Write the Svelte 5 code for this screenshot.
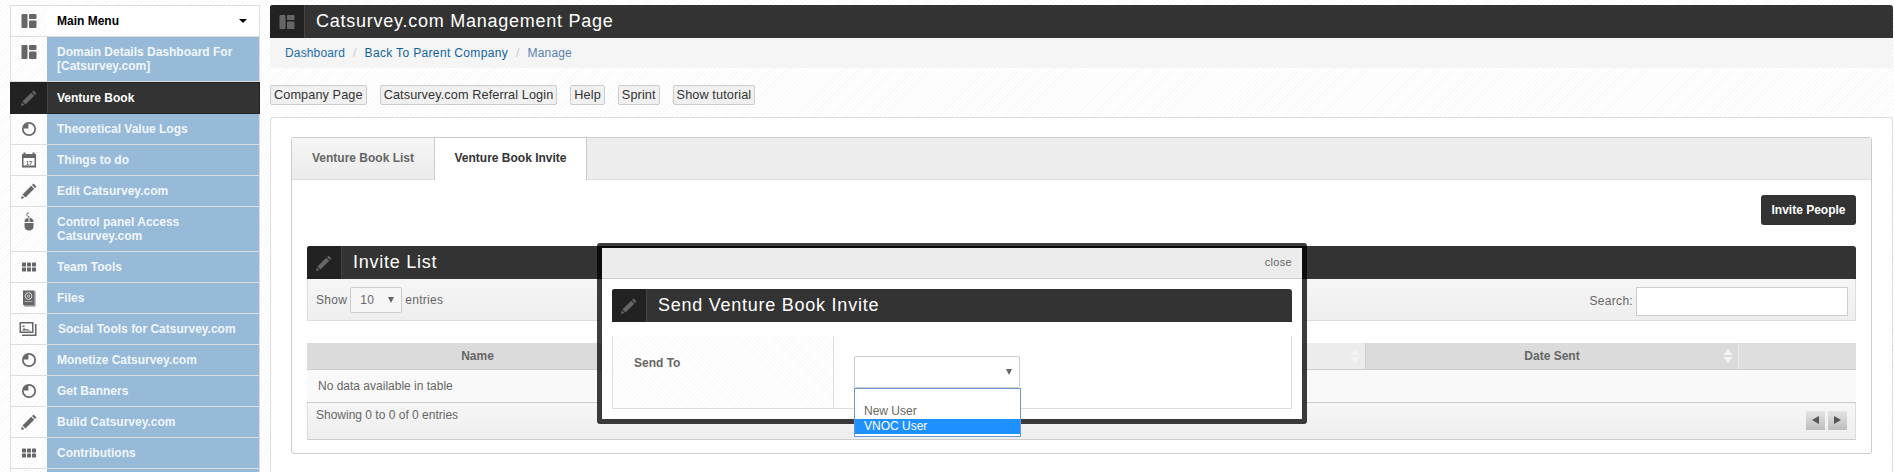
<script>
	const menu = [
		{ icon: 'dash', label: 'Domain Details Dashboard For [Catsurvey.com]', tall: true },
		{ icon: 'pencil', label: 'Venture Book', active: true },
		{ icon: 'pie', label: 'Theoretical Value Logs' },
		{ icon: 'calendar', label: 'Things to do' },
		{ icon: 'pencil', label: 'Edit Catsurvey.com' },
		{ icon: 'mouse', label: 'Control panel Access Catsurvey.com', tall: true },
		{ icon: 'grid', label: 'Team Tools' },
		{ icon: 'book', label: 'Files' },
		{ icon: 'images', label: 'Social Tools for Catsurvey.com', nudge: true },
		{ icon: 'pie', label: 'Monetize Catsurvey.com' },
		{ icon: 'pie', label: 'Get Banners' },
		{ icon: 'pencil', label: 'Build Catsurvey.com' },
		{ icon: 'grid', label: 'Contributions' },
		{ icon: 'grid', label: '' }
	];
	const buttons = ['Company Page', 'Catsurvey.com Referral Login', 'Help', 'Sprint', 'Show tutorial'];
</script>

{#snippet icon(name)}
	<svg class="ico" viewBox="0 0 20 20" width="20" height="20" aria-hidden="true">
		{#if name === 'dash'}
			<rect x="2.5" y="3" width="6" height="14" rx="1" />
			<rect x="10" y="3" width="7.5" height="5" rx="1" />
			<rect x="10" y="9.5" width="7.5" height="7.5" rx="1" />
		{:else if name === 'pencil'}
			<path d="M14.5 2.5 L17.5 5.5 L16 7 L13 4 Z M12.2 4.8 L15.2 7.8 L6.5 16.5 L3.5 13.5 Z M2.9 14.6 L5.4 17.1 L2 18 Z" />
		{:else if name === 'pie'}
			<circle cx="10" cy="10" r="6.2" fill="none" stroke="#666" stroke-width="1.7" />
			<path d="M9.4 9.4 V4.6 A5.4 5.4 0 0 0 4.6 9.4 Z" />
		{:else if name === 'calendar'}
			<path d="M4.5 2.5 h2 v1.5 h7 v-1.5 h2 v1.5 h1.5 v13.5 h-14 v-13.5 h1.5 Z M4.5 8 v7.5 h11 v-7.5 Z" fill-rule="evenodd" />
			<text x="10" y="14.6" class="cal">17</text>
		{:else if name === 'mouse'}
			<path d="M10 1 C6.5 1 7 4 10 4.6 L10 6" fill="none" stroke="#666" stroke-width="1" />
			<path d="M5.5 10 C5.5 7.5 7 6 9.5 6 V10 Z M10.5 6 C13 6 14.5 7.5 14.5 10 H10.5 Z M5.5 11 H14.5 V14.5 C14.5 17 12.5 18.5 10 18.5 C7.5 18.5 5.5 17 5.5 14.5 Z" />
		{:else if name === 'grid'}
			{#each [3, 8, 13] as x}
				{#each [5.5, 10.5] as y}
					<rect {x} {y} width="4" height="4" rx="0.6" />
				{/each}
			{/each}
		{:else if name === 'book'}
			<path d="M4 2.5 H15.5 V17.5 H5 L4 16.5 Z" />
			<path d="M15.5 3.5 H16.5 V18.5 H5.5 V17.5 H15.5 Z" opacity="0.8" />
			<circle cx="9.5" cy="8" r="3.4" fill="none" stroke="#ddd" stroke-width="1" />
			<circle cx="9.5" cy="8" r="1.2" fill="none" stroke="#ddd" stroke-width="0.8" />
			<rect x="5.5" y="13" width="8" height="1" fill="#aaa" />
		{:else if name === 'images'}
			<path d="M0.5 3 H14.5 V14 H0.5 Z M2 4.5 V12.5 H13 V4.5 Z" fill-rule="evenodd" />
			<path d="M3 11.5 L5 9 L7 10.5 L8 10 L12 11.5 Z M3.5 6.5 h2 v1.5 h-2 Z" />
			<path d="M16 5 H17.5 V17 H3 V15.5 H16 Z" />
		{/if}
	</svg>
{/snippet}

{#snippet titleBar(name, text)}
	<div class="title-bar">
		<span class="title-icon">{@render icon(name)}</span>
		<h2>{text}</h2>
	</div>
{/snippet}

{#snippet sortArrows()}
	<svg class="sort" viewBox="0 0 10 16" width="10" height="16" aria-hidden="true">
		<path d="M5 1 L9.5 7 H0.5 Z M0.5 9 H9.5 L5 15 Z" />
	</svg>
{/snippet}

<div class="page">
	<nav class="sidebar">
		<div class="row head">
			<span class="cell-icon">{@render icon('dash')}</span>
			<span class="cell-label">Main Menu<i class="caret"></i></span>
		</div>
		{#each menu as item}
			<div class="row" class:tall={item.tall} class:active={item.active} class:nudge={item.nudge}>
				<span class="cell-icon">{@render icon(item.icon)}</span>
				<span class="cell-label">{item.label}</span>
			</div>
		{/each}
	</nav>

	<main class="main">
		{@render titleBar('dash', 'Catsurvey.com Management Page')}
		<div class="crumbs">
			<a href="#top">Dashboard</a><span class="sep">/</span>
			<a href="#top" class="parent">Back To Parent Company</a><span class="sep">/</span>
			<span class="current">Manage</span>
		</div>

		<div class="actions">
			{#each buttons as label}
				<button type="button" class="plain">{label}</button>
			{/each}
		</div>

		<section class="panel">
			<div class="tabs">
				<div class="tab-head">
					<div class="tab">Venture Book List</div>
					<div class="tab on">Venture Book Invite</div>
				</div>
				<div class="tab-body">
					<div class="invite-row">
						<button type="button" class="dark">Invite People</button>
					</div>

					{@render titleBar('pencil', 'Invite List')}
					<div class="toolbar">
						<div class="length">
							Show
							<div class="fake-select small"><span>10</span><i class="tri"></i></div>
							entries
						</div>
						<label class="search">Search: <input type="text" /></label>
					</div>

					<div class="thead">
						<div class="th name">Name</div>
						<div class="th mid">{@render sortArrows()}</div>
						<div class="th date">Date Sent{@render sortArrows()}</div>
						<div class="th last"></div>
					</div>
					<div class="empty">No data available in table</div>
					<div class="tfoot">
						<span>Showing 0 to 0 of 0 entries</span>
						<div class="pager">
							<span class="page-btn"><i class="left"></i></span>
							<span class="page-btn"><i class="right"></i></span>
						</div>
					</div>
				</div>
			</div>
		</section>
	</main>

	<div class="modal">
		<div class="modal-head"><span>close</span></div>
		<div class="modal-body">
			{@render titleBar('pencil', 'Send Venture Book Invite')}
			<div class="form-row">
				<div class="form-label">Send To</div>
				<div class="form-value">
					<div class="fake-select wide"><span></span><i class="tri"></i></div>
				</div>
			</div>
		</div>
		<div class="dropdown">
			<div class="opt"></div>
			<div class="opt">New User</div>
			<div class="opt hi">VNOC User</div>
		</div>
	</div>
</div>

<style>
	:global(body) {
		margin: 0;
		overflow: hidden;
	}
	.page {
		position: relative;
		box-sizing: border-box;
		display: flex;
		gap: 10px;
		height: 472px;
		padding: 5px 1px 0 10px;
		overflow: hidden;
		font-family: "Liberation Sans", Arial, sans-serif;
		font-size: 12px;
		color: #666;
		background: repeating-linear-gradient(135deg, #fff 0, #fff 2px, #f8f8f8 2px, #f8f8f8 3px);
	}

	.ico {
		display: block;
		fill: #666;
	}
	.cal {
		font: bold 6px "Liberation Sans", Arial, sans-serif;
		text-anchor: middle;
		fill: #666;
	}

	/* sidebar */
	.sidebar {
		flex: 0 0 250px;
		box-sizing: border-box;
		border: 1px solid #ddd;
		border-bottom: 0;
	}
	.row {
		display: flex;
		height: 31px;
		box-sizing: border-box;
		border-bottom: 1px solid #ddd;
		flex-shrink: 0;
	}
	.row.tall {
		height: 45px;
	}
	.cell-icon {
		flex: 0 0 36px;
		display: flex;
		justify-content: center;
		padding-top: 5px;
		box-sizing: border-box;
	}
	.cell-label {
		flex: 1;
		display: flex;
		align-items: center;
		padding: 0 10px;
		font-weight: bold;
		line-height: 14px;
		color: #f0f6fb;
		background: #97bad8;
	}
	.nudge .cell-label {
		padding-left: 11px;
	}
	.head .cell-label {
		position: relative;
		color: #000;
		background: #fff;
	}
	.caret {
		position: absolute;
		right: 12px;
		top: 13px;
		border: 4px solid transparent;
		border-top: 4px solid #000;
		border-bottom: 0;
	}
	.row.active {
		height: 32px;
		margin: 0 -1px;
		border: 1px solid #222;
		background: #222;
	}
	.active .cell-label {
		padding-left: 9px;
		color: #fff;
		background: #333;
		border-left: 1px solid #444;
	}

	/* main column */
	.main {
		flex: 1;
		min-width: 0;
		display: flex;
		flex-direction: column;
	}
	.title-bar {
		display: flex;
		align-items: stretch;
		height: 33px;
		flex-shrink: 0;
		border-radius: 3px 3px 0 0;
		background: #333;
		overflow: hidden;
	}
	.title-icon {
		flex: 0 0 35px;
		box-sizing: border-box;
		display: flex;
		align-items: center;
		justify-content: center;
		background: #222;
		border-right: 1px solid #444;
	}
	.title-bar h2 {
		margin: 0;
		padding-left: 11px;
		font-size: 18px;
		font-weight: normal;
		line-height: 32px;
		letter-spacing: 0.75px;
		color: #fff;
	}
	.crumbs {
		height: 30px;
		display: flex;
		align-items: center;
		padding-left: 15px;
		letter-spacing: 0.15px;
		background: #f5f5f5;
		border-radius: 0 0 4px 4px;
	}
	.crumbs a {
		color: #1b6ca8;
		text-decoration: none;
	}
	.crumbs a.parent {
		color: #0f639f;
		letter-spacing: 0.35px;
	}
	.sep {
		padding: 0 8px;
		color: #ccc;
	}
	.current {
		color: #5b7fae;
	}
	.actions {
		display: flex;
		gap: 13px;
		margin: 17px 0 12px;
	}
	.plain {
		height: 20px;
		padding: 0 3px;
		font: 12.7px "Liberation Sans", Arial, sans-serif;
		letter-spacing: 0.1px;
		color: #333;
		background: #f0f0f0;
		border: 1px solid #ccc;
		border-radius: 2px;
	}
	.panel {
		flex: 1;
		padding: 19px 20px 0;
		background: #fff;
		border: 1px solid #ddd;
		border-bottom: 0;
		border-radius: 3px 3px 0 0;
	}
	.tabs {
		height: 317px;
		box-sizing: border-box;
		border: 1px solid #ccc;
		border-radius: 3px;
	}
	.tab-head {
		display: flex;
		height: 42px;
		box-sizing: border-box;
		background: #ededed;
		border-bottom: 1px solid #ddd;
		border-radius: 3px 3px 0 0;
	}
	.tab {
		box-sizing: border-box;
		width: 142px;
		height: 41px;
		line-height: 41px;
		text-align: center;
		font-weight: bold;
		color: #666;
		background: linear-gradient(#f6f6f6, #ebebeb);
	}
	.tab.on {
		width: 153px;
		height: 42px;
		color: #333;
		background: #fff;
		border-left: 1px solid #ccc;
		border-right: 1px solid #ccc;
	}
	.tab-body {
		padding: 15px 15px 0;
	}
	.invite-row {
		display: flex;
		justify-content: flex-end;
		margin-bottom: 21px;
	}
	.dark {
		width: 95px;
		height: 30px;
		padding: 0;
		font: bold 12px "Liberation Sans", Arial, sans-serif;
		color: #fff;
		background: #333;
		border: 0;
		border-radius: 3px;
	}
	.toolbar {
		display: flex;
		justify-content: space-between;
		height: 42px;
		box-sizing: border-box;
		padding: 8px 7px 0 8px;
		letter-spacing: 0.3px;
		background: linear-gradient(#f6f6f6, #eee);
		border: 1px solid #ddd;
		border-top: 0;
	}
	.length {
		display: flex;
		align-items: flex-start;
		gap: 3px;
		line-height: 26px;
	}
	.fake-select {
		position: relative;
		box-sizing: border-box;
		background: #fff;
		border: 1px solid #ccc;
		border-radius: 2px;
	}
	.fake-select.small {
		width: 52px;
		height: 26px;
		padding-left: 9px;
		line-height: 24px;
		background: #f6f6f6;
	}
	.fake-select.wide {
		width: 166px;
		height: 32px;
	}
	.tri {
		position: absolute;
		right: 7px;
		top: 50%;
		margin-top: -3px;
		border: 3px solid transparent;
		border-top: 6px solid #666;
		border-bottom: 0;
	}
	.search {
		display: flex;
		align-items: flex-start;
		gap: 3px;
		line-height: 28px;
	}
	.search input {
		box-sizing: border-box;
		width: 212px;
		height: 29px;
		margin: 0;
		background: #fff;
		border: 1px solid #ccc;
	}
	.thead {
		display: flex;
		height: 27px;
		box-sizing: border-box;
		margin-top: 22px;
		border-bottom: 1px solid #ccc;
	}
	.th {
		position: relative;
		box-sizing: border-box;
		line-height: 26px;
		text-align: center;
		font-weight: bold;
		color: #666;
		background: #dbdbdb;
	}
	.name {
		width: 341px;
	}
	.mid {
		width: 717px;
		background: #ececec;
	}
	.date {
		width: 374px;
		border-left: 1px solid #ccc;
		border-right: 1px solid #ececec;
	}
	.last {
		flex: 1;
		background: #dedede;
	}
	.sort {
		position: absolute;
		right: 5px;
		top: 5px;
		fill: #f4f4f4;
	}
	.empty {
		height: 33px;
		box-sizing: border-box;
		padding-left: 11px;
		line-height: 32px;
		background: #f9f9f9;
		border-bottom: 1px solid #ccc;
	}
	.tfoot {
		display: flex;
		justify-content: space-between;
		height: 37px;
		box-sizing: border-box;
		padding: 5px 8px 0 8px;
		line-height: 14px;
		background: linear-gradient(#f6f6f6, #eee);
		border: 1px solid #ddd;
		border-top: 0;
		border-bottom-color: #ccc;
	}
	.pager {
		display: flex;
		gap: 3px;
		margin-top: 3px;
	}
	.page-btn {
		position: relative;
		width: 19px;
		height: 19px;
		background: linear-gradient(#e4e4e4, #bdbdbd);
	}
	.page-btn i {
		position: absolute;
		top: 5px;
		left: 6px;
		border: 4px solid transparent;
		border-left: 0;
		border-right: 7px solid #555;
	}
	.page-btn i.right {
		border-right: 0;
		border-left: 7px solid #555;
	}

	/* modal sits over the page */
	.modal {
		position: absolute;
		left: 597px;
		top: 243px;
		box-sizing: border-box;
		width: 710px;
		height: 181px;
		background: #fff;
		border: 5px solid rgba(0, 0, 0, 0.76);
		border-radius: 3px;
		background-clip: padding-box;
	}
	.modal-head {
		display: flex;
		justify-content: flex-end;
		height: 31px;
		box-sizing: border-box;
		padding: 0 10px;
		font-size: 11px;
		line-height: 28px;
		letter-spacing: 0.3px;
		background: #ececec;
		border-bottom: 1px solid #ccc;
	}
	.modal-body {
		padding: 10px 10px 0;
	}
	.form-row {
		display: flex;
		height: 73px;
		box-sizing: border-box;
		margin-top: 14px;
		border: 1px solid #ddd;
		border-top: 0;
	}
	.form-label {
		box-sizing: border-box;
		width: 221px;
		padding: 20px 0 0 21px;
		font-weight: bold;
		background: repeating-linear-gradient(45deg, #fff 0, #fff 2px, #f9f9f9 2px, #f9f9f9 3px);
		border-right: 1px solid #ddd;
	}
	.form-value {
		padding: 20px 0 0 20px;
	}
	.dropdown {
		position: absolute;
		left: 252px;
		top: 140px;
		box-sizing: border-box;
		width: 167px;
		height: 49px;
		background: #fff;
		border: 1px solid #6d97d3;
	}
	.opt {
		height: 15px;
		padding-left: 9px;
		line-height: 15px;
		font-size: 12px;
	}
	.opt.hi {
		color: #fff;
		background: #1e90ff;
	}
</style>
